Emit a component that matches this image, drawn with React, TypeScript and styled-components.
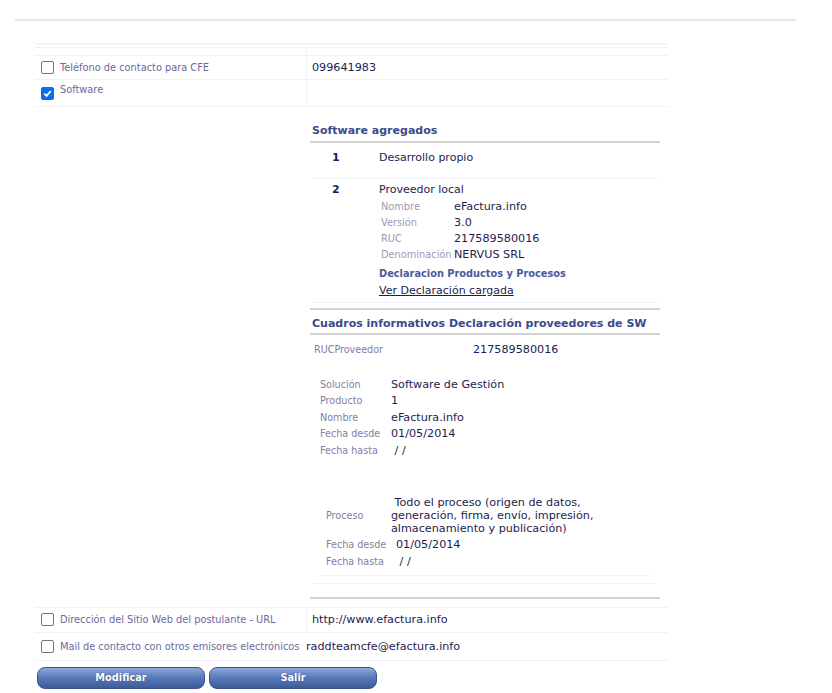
import React from "react";
import styled, { createGlobalStyle } from "styled-components";

const GlobalStyle = createGlobalStyle`
  body {
    margin: 0;
    background: #ffffff;
    font-family: "DejaVu Sans", Verdana, sans-serif;
    color: #1d1d50;
  }
`;

const Page = styled.div`
  padding: 19px 0 0 15px;
`;

const TopRule = styled.div`
  width: 781px;
  height: 2px;
  background: #e8e8e8;
`;

const Form = styled.div`
  margin: 22px 0 0 20px;
  width: 633px;
`;

const Band = styled.div`
  height: 2px;
  background: #f3f3fc;
  margin-bottom: 2px;
`;

const Row = styled.div<{ $labelWidth?: number; $height?: number }>`
  display: grid;
  grid-template-columns: minmax(${(p) => p.$labelWidth ?? 272}px, auto) 1fr;
  min-height: ${(p) => p.$height ?? 24}px;
  border-bottom: 1px solid #f1f1fb;
`;

const FirstRow = styled(Row)`
  border-top: 1px solid #f1f1fb;
`;

const LabelCell = styled.div<{ $top?: boolean; $divider?: boolean }>`
  display: flex;
  align-items: ${(p) => (p.$top ? "flex-start" : "center")};
  padding: ${(p) => (p.$top ? "3px 0 0 6px" : "0 0 0 6px")};
  border-right: ${(p) => (p.$divider === false ? "none" : "1px solid #f3f3fb")};
`;

const Box = styled.span<{ $checked?: boolean; $offset?: number }>`
  flex: none;
  width: 13px;
  height: 13px;
  box-sizing: border-box;
  border-radius: 2px;
  border: 1px solid ${(p) => (p.$checked ? "#0b6cf0" : "#767676")};
  background: ${(p) => (p.$checked ? "#0b6cf0" : "#ffffff")};
  margin: ${(p) => p.$offset ?? 0}px 6px 0 0;
  display: flex;
  align-items: center;
  justify-content: center;
`;

const FieldLabel = styled.span`
  font-size: 9.8px;
  line-height: 13px;
  color: #6a6a9a;
  white-space: nowrap;
`;

const ValueCell = styled.div`
  display: flex;
  align-items: center;
  padding-left: 5px;
  font-size: 11.2px;
  color: #1d1d50;
`;

const DetailCell = styled.div`
  padding: 0 0 8px 3px;
`;

const Panel = styled.div`
  width: 350px;
`;

const SectionTitle = styled.div<{ $ruleTop?: boolean }>`
  font-size: 11px;
  font-weight: bold;
  line-height: 14px;
  color: #3a4a8a;
  padding: ${(p) => (p.$ruleTop ? "7px 0 2px 2px" : "17px 0 3px 2px")};
  border-bottom: 2px solid #d3d3d3;
  border-top: ${(p) => (p.$ruleTop ? "2px solid #d3d3d3" : "none")};
  margin-top: ${(p) => (p.$ruleTop ? "5px" : "0")};
  white-space: nowrap;
`;

const Item = styled.div<{ $pt: number; $pb: number }>`
  display: grid;
  grid-template-columns: 67px 1fr;
  margin-left: 2px;
  width: 346px;
  padding: ${(p) => p.$pt}px 0 ${(p) => p.$pb}px;
  border-bottom: 1px solid #f0f0fa;
`;

const ItemNumber = styled.div`
  padding-left: 20px;
  font-size: 11px;
  font-weight: bold;
  line-height: 14px;
`;

const ItemBody = styled.div`
  font-size: 11px;
  line-height: 14px;
`;

const SubRow = styled.div<{ $first?: boolean }>`
  display: flex;
  height: 16px;
  align-items: center;
  margin-top: ${(p) => (p.$first ? "2px" : "0")};
  padding-left: 2px;
`;

const SubLabel = styled.span`
  min-width: 73px;
  font-size: 9.8px;
  color: #9a9ab8;
  white-space: nowrap;
`;

const SubValue = styled.span`
  font-size: 11.2px;
`;

const SubHeading = styled.div`
  margin-top: 4px;
  font-size: 9.8px;
  font-weight: bold;
  line-height: 14px;
  color: #4a5a9a;
`;

const DocLink = styled.a`
  display: block;
  margin-top: 3px;
  font-size: 11px;
  line-height: 14px;
  color: #1d1d50;
  text-decoration: underline;
`;

const InfoRow = styled.div<{ $labelWidth: number; $indent: number; $height?: number; $mt?: number }>`
  display: grid;
  grid-template-columns: ${(p) => p.$labelWidth}px 1fr;
  align-items: center;
  padding-left: ${(p) => p.$indent}px;
  min-height: ${(p) => p.$height ?? 16.5}px;
  margin-top: ${(p) => p.$mt ?? 0}px;
`;

const InfoLabel = styled.span`
  font-size: 9.6px;
  color: #8080a6;
  white-space: nowrap;
`;

const InfoValue = styled.span<{ $shift?: number }>`
  font-size: 11.2px;
  line-height: 13px;
  padding-left: ${(p) => p.$shift ?? 0}px;
`;

const Hairline = styled.div<{ $left: number; $width: number; $mt: number }>`
  margin: ${(p) => p.$mt}px 0 0 ${(p) => p.$left}px;
  width: ${(p) => p.$width}px;
  border-top: 1px solid #f0f0f8;
`;

const HeavyLine = styled.div`
  margin-top: 13px;
  height: 2px;
  background: #d3d3d3;
`;

const Buttons = styled.div`
  display: flex;
  gap: 4px;
  margin: 6px 0 0 2px;
`;

const Button = styled.button`
  width: 168px;
  height: 22px;
  border: 1px solid #3b5388;
  border-radius: 8px;
  background: linear-gradient(#8ea8d9, #5a7cbc 45%, #3d5b98);
  color: #ffffff;
  font-family: "DejaVu Sans", Verdana, sans-serif;
  font-size: 9.8px;
  font-weight: bold;
  text-shadow: 0 0 1px #2a3a6a;
  cursor: pointer;
`;

const Check = ({ checked, offset }: { checked?: boolean; offset?: number }) => (
  <Box $checked={checked} $offset={offset}>
    {checked && (
      <svg width="9" height="9" viewBox="0 0 10 10">
        <path d="M1.5 5.2 L4 7.6 L8.6 2.2" fill="none" stroke="#ffffff" strokeWidth="2" />
      </svg>
    )}
  </Box>
);

const App = () => {
  return (
    <Page>
      <GlobalStyle />
      <TopRule />
      <Form>
        <Band />
        <FirstRow $height={7}>
          <LabelCell />
          <div />
        </FirstRow>
        <Row $height={23}>
          <LabelCell>
            <Check />
            <FieldLabel>Teléfono de contacto para CFE</FieldLabel>
          </LabelCell>
          <ValueCell>099641983</ValueCell>
        </Row>
        <Row $height={26}>
          <LabelCell $top>
            <Check checked offset={4} />
            <FieldLabel>Software</FieldLabel>
          </LabelCell>
          <ValueCell />
        </Row>
        <Row>
          <div />
          <DetailCell>
            <Panel>
              <SectionTitle>Software agregados</SectionTitle>
              <Item $pt={8} $pb={13}>
                <ItemNumber>1</ItemNumber>
                <ItemBody>Desarrollo propio</ItemBody>
              </Item>
              <Item $pt={4} $pb={4}>
                <ItemNumber>2</ItemNumber>
                <ItemBody>
                  Proveedor local
                  <SubRow $first>
                    <SubLabel>Nombre</SubLabel>
                    <SubValue>eFactura.info</SubValue>
                  </SubRow>
                  <SubRow>
                    <SubLabel>Versión</SubLabel>
                    <SubValue>3.0</SubValue>
                  </SubRow>
                  <SubRow>
                    <SubLabel>RUC</SubLabel>
                    <SubValue>217589580016</SubValue>
                  </SubRow>
                  <SubRow>
                    <SubLabel>Denominación</SubLabel>
                    <SubValue>NERVUS SRL</SubValue>
                  </SubRow>
                  <SubHeading>Declaracion Productos y Procesos</SubHeading>
                  <DocLink href="#">Ver Declaración cargada</DocLink>
                </ItemBody>
              </Item>

              <SectionTitle $ruleTop>Cuadros informativos Declaración proveedores de SW</SectionTitle>
              <InfoRow $labelWidth={159} $indent={4} $height={14} $mt={7}>
                <InfoLabel>RUCProveedor</InfoLabel>
                <InfoValue>217589580016</InfoValue>
              </InfoRow>

              <InfoRow $labelWidth={71} $indent={10} $mt={20}>
                <InfoLabel>Solución</InfoLabel>
                <InfoValue>Software de Gestión</InfoValue>
              </InfoRow>
              <InfoRow $labelWidth={71} $indent={10}>
                <InfoLabel>Producto</InfoLabel>
                <InfoValue>1</InfoValue>
              </InfoRow>
              <InfoRow $labelWidth={71} $indent={10}>
                <InfoLabel>Nombre</InfoLabel>
                <InfoValue>eFactura.info</InfoValue>
              </InfoRow>
              <InfoRow $labelWidth={71} $indent={10}>
                <InfoLabel>Fecha desde</InfoLabel>
                <InfoValue>01/05/2014</InfoValue>
              </InfoRow>
              <InfoRow $labelWidth={71} $indent={10}>
                <InfoLabel>Fecha hasta</InfoLabel>
                <InfoValue>{"\u00a0/ /"}</InfoValue>
              </InfoRow>

              <InfoRow $labelWidth={65} $indent={16} $mt={37}>
                <InfoLabel>Proceso</InfoLabel>
                <InfoValue>
                  {"\u00a0Todo el proceso (origen de datos,"}
                  <br />
                  generación, firma, envío, impresión,
                  <br />
                  almacenamiento y publicación)
                </InfoValue>
              </InfoRow>
              <InfoRow $labelWidth={65} $indent={16} $mt={2}>
                <InfoLabel>Fecha desde</InfoLabel>
                <InfoValue $shift={5}>01/05/2014</InfoValue>
              </InfoRow>
              <InfoRow $labelWidth={65} $indent={16}>
                <InfoLabel>Fecha hasta</InfoLabel>
                <InfoValue $shift={5}>{"\u00a0/ /"}</InfoValue>
              </InfoRow>

              <Hairline $left={10} $width={330} $mt={5} />
              <Hairline $left={4} $width={341} $mt={7} />
              <HeavyLine />
            </Panel>
          </DetailCell>
        </Row>
        <Row $height={24}>
          <LabelCell>
            <Check />
            <FieldLabel>Dirección del Sitio Web del postulante - URL</FieldLabel>
          </LabelCell>
          <ValueCell>http://www.efactura.info</ValueCell>
        </Row>
        <Row $height={27} $labelWidth={266}>
          <LabelCell $divider={false}>
            <Check />
            <FieldLabel>Mail de contacto con otros emisores electrónicos</FieldLabel>
          </LabelCell>
          <ValueCell>raddteamcfe@efactura.info</ValueCell>
        </Row>
        <Buttons>
          <Button>Modificar</Button>
          <Button>Salir</Button>
        </Buttons>
      </Form>
    </Page>
  );
};

export default App;
